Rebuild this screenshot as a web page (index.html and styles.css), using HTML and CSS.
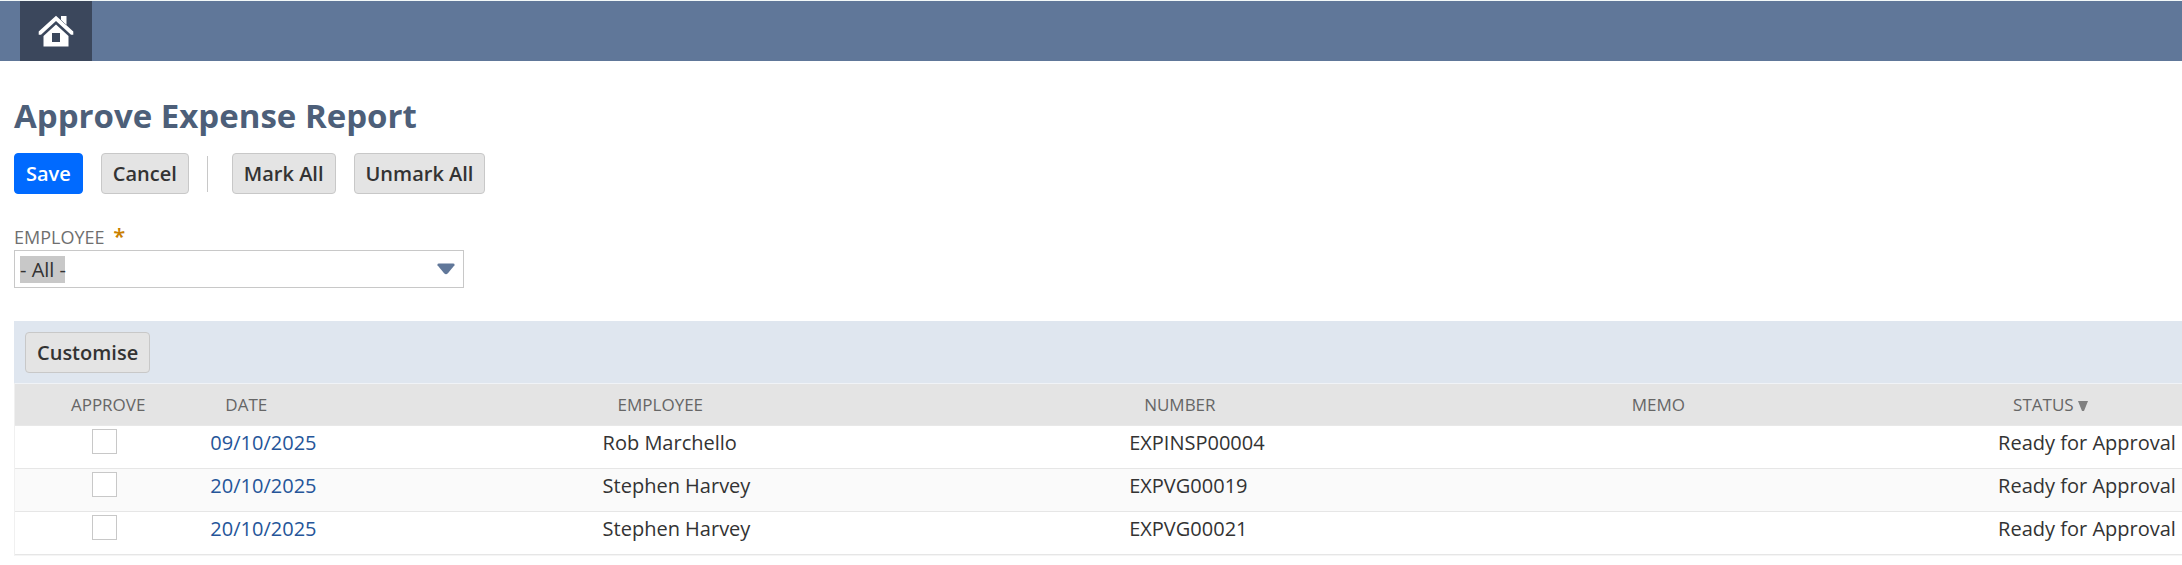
FILE: index.html
```html
<!DOCTYPE html>
<html lang="en-GB">
<head>
<meta charset="utf-8">
<meta name="viewport" content="width=device-width, initial-scale=1">
<title>Approve Expense Report</title>
<link rel="stylesheet" href="styles.css">
</head>
<body>
<nav class="topbar" aria-label="Main">
  <a class="home" href="#" aria-label="Home">
    <svg class="home-icon" viewBox="0 0 36 33" aria-hidden="true">
      <path class="wall" fill-rule="evenodd" d="M18 9.500 5.500 21v10.500h25V21zM14 18h8v9h-8z"/>
      <path class="wall" d="M23 1h5.500v9L23 5.500z"/>
      <path class="roof" d="M18 .8.700 16.500v3.200H3L18 6l15 13.700h2.300v-3.200z"/>
    </svg>
  </a>
</nav>
<main class="page">
  <h1 class="title">Approve Expense Report</h1>
  <div class="actions">
    <button class="btn btn-primary" type="button">Save</button>
    <button class="btn" type="button">Cancel</button>
    <span class="divider"></span>
    <button class="btn" type="button">Mark All</button>
    <button class="btn" type="button">Unmark All</button>
  </div>
  <div class="field">
    <label class="field-label" for="employee">EMPLOYEE <span class="required">*</span></label>
    <div class="select-wrap">
      <select class="select" id="employee"><option>- All -</option></select>
      <svg class="caret" viewBox="0 0 18 12" aria-hidden="true"><path d="M2 .5h14q2 0 1.500 1.800l-6.600 8q-1.900 2-3.800 0L.5 2.300Q0 .5 2 .5z"/></svg>
    </div>
  </div>
  <section class="panel">
    <div class="panel-bar"><button class="btn" type="button">Customise</button></div>
    <table class="list">
      <colgroup><col class="c-approve"><col class="c-date"><col class="c-employee"><col class="c-number"><col class="c-memo"><col></colgroup>
      <thead>
        <tr><th class="center">APPROVE</th><th>DATE</th><th>EMPLOYEE</th><th>NUMBER</th><th>MEMO</th><th>STATUS<svg class="sort" viewBox="0 0 10 10" aria-hidden="true"><path d="M0 0h10L6 10H4z"/></svg></th></tr>
      </thead>
      <tbody>
        <tr><td class="tick"><input class="check" type="checkbox" aria-label="Approve EXPINSP00004"></td><td><a class="link" href="#">09/10/2025</a></td><td>Rob Marchello</td><td>EXPINSP00004</td><td></td><td>Ready for Approval</td></tr>
        <tr><td class="tick"><input class="check" type="checkbox" aria-label="Approve EXPVG00019"></td><td><a class="link" href="#">20/10/2025</a></td><td>Stephen Harvey</td><td>EXPVG00019</td><td></td><td>Ready for Approval</td></tr>
        <tr><td class="tick"><input class="check" type="checkbox" aria-label="Approve EXPVG00021"></td><td><a class="link" href="#">20/10/2025</a></td><td>Stephen Harvey</td><td>EXPVG00021</td><td></td><td>Ready for Approval</td></tr>
      </tbody>
    </table>
  </section>
</main>
</body>
</html>
```
FILE: styles.css
```css
* { box-sizing: border-box; }
body {
  margin: 0;
  background: #fff;
  color: #333;
  font: 20px/28px "Open Sans", "Noto Sans", sans-serif;
}
.topbar {
  display: flex;
  height: 61px;
  padding-left: 20px;
  border-top: 1px solid #f2f8f8;
  background: #607799;
}
.home {
  display: flex;
  justify-content: center;
  width: 72px;
  padding-top: 14px;
  background: #3b475c;
}
.home-icon { width: 36px; height: 33px; }
.wall, .roof { fill: #fff; }
.roof { stroke: #3b475c; stroke-width: 1; paint-order: stroke; }
.page { padding: 31px 0 0 14px; }
.title {
  margin: 0;
  color: #4d5f79;
  font-size: 33px;
  line-height: 48px;
  font-weight: 700;
}
.actions {
  display: flex;
  align-items: center;
  gap: 18px;
  margin-top: 13px;
}
.btn {
  height: 41px;
  padding: 0 11px;
  border: 1px solid #c8c8c8;
  border-radius: 4px;
  background: #e4e4e4;
  color: #333;
  font: 600 20px/28px "Open Sans", "Noto Sans", sans-serif;
}
.btn-primary {
  border-color: #006aff;
  background: #006aff;
  color: #fff;
}
.divider {
  width: 1px;
  height: 36px;
  margin-right: 6px;
  background: #c8c8c8;
}
.field { margin-top: 31px; }
.field-label {
  display: block;
  color: #6f6f6f;
  font-size: 18px;
  line-height: 25px;
}
.required {
  margin-left: 4px;
  color: #c97f00;
  font-size: 22px;
  line-height: 20px;
  font-weight: 600;
}
.select-wrap {
  position: relative;
  width: 450px;
  max-width: 100%;
}
.select {
  display: block;
  width: 100%;
  height: 38px;
  padding: 2px 40px 0 5px;
  border: 1px solid #c8c8c8;
  border-radius: 0;
  appearance: none;
  background: linear-gradient(#c8c8c8, #c8c8c8) 5px 5px / 45px 27px no-repeat #fff;
  color: #333;
  font: inherit;
}
.caret {
  position: absolute;
  top: 13px;
  right: 9px;
  width: 18px;
  height: 12px;
  fill: #607799;
  pointer-events: none;
}
.panel { margin-top: 33px; }
.panel-bar {
  display: flex;
  padding: 11px 11px 10px;
  background: #dfe6ef;
}
.list {
  width: 100%;
  table-layout: fixed;
  border-collapse: separate;
  border-spacing: 0;
  border-left: 1px solid #f0f0f0;
  border-bottom: 1px solid #f5f5f5;
}
.c-approve { width: 8.6%; }
.c-date { width: 18.1%; }
.c-employee { width: 24.3%; }
.c-number { width: 22.5%; }
.c-memo { width: 17.6%; }
.list th {
  height: 43px;
  padding: 0 0 0 24px;
  border-top: 1px solid #f0f3f7;
  border-bottom: 1px solid #e8e8e8;
  background: #e4e4e4;
  color: #666;
  font-size: 17px;
  line-height: 24px;
  font-weight: 400;
  text-align: left;
}
.list .center { padding-left: 0; text-align: center; }
.list td {
  height: 43px;
  padding: 3px 0 11px 9px;
  border-bottom: 1px solid #e6e6e6;
  line-height: 28px;
  white-space: nowrap;
}
.list tr:nth-child(even) td { background: #fafafa; }
.list .tick { padding: 3px 8px 0 0; text-align: center; vertical-align: top; }
.check {
  display: block;
  width: 25px;
  height: 25px;
  margin: 0 auto;
  border: 1px solid #c8c8c8;
  appearance: none;
  background: #fff;
}
.link { color: #255599; text-decoration: none; }
.sort { width: 10px; height: 10px; margin-left: 4px; fill: #808080; }
```
